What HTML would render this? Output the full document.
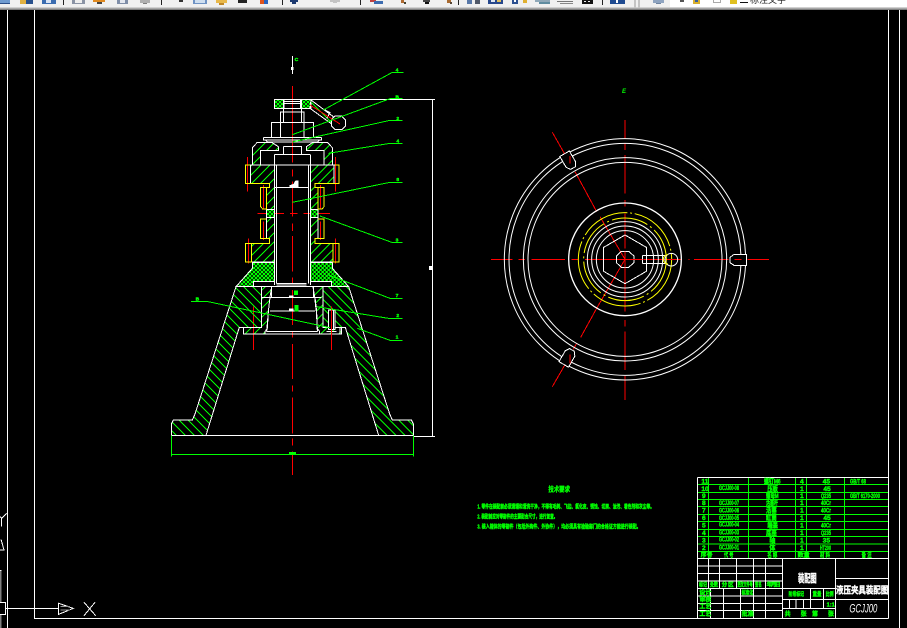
<!DOCTYPE html>
<html lang="zh">
<head>
<meta charset="utf-8">
<title>液压夹具装配图</title>
<style>
html,body{margin:0;padding:0;background:#000;width:907px;height:628px;overflow:hidden}
svg{display:block;position:absolute;left:0;top:0}
text{font-family:"Liberation Sans","Noto Sans CJK SC",sans-serif}
.g{fill:#0f0;stroke:#0f0;stroke-width:1.2;font-weight:700}
.w{fill:#fff;stroke:#fff;stroke-width:1.2;font-weight:700}
</style>
</head>
<body>
<svg width="907" height="628" viewBox="0 0 907 628" xmlns="http://www.w3.org/2000/svg" shape-rendering="crispEdges">
<defs>
<pattern id="sl" width="27" height="27" patternUnits="userSpaceOnUse"><path d="M-3,30 L30,-3 M-3,3 L3,-3 M24,30 L30,24" stroke="#0f0" stroke-width="2.2" fill="none"/></pattern>
<pattern id="bk" width="27" height="27" patternUnits="userSpaceOnUse"><path d="M-3,-3 L30,30 M24,-3 L30,3 M-3,24 L3,30" stroke="#0f0" stroke-width="2.2" fill="none"/></pattern>
<pattern id="dn" width="12" height="12" patternUnits="userSpaceOnUse"><rect width="12" height="12" fill="#000"/><path d="M-1,13 L13,-1 M-1,-1 L13,13" stroke="#0f0" stroke-width="2.6" fill="none"/></pattern>
<g id="A">
<path d="M277,345 V293 L292,277 H335 L355,290 V301 H302 V345Z"/>
<path d="M272,345 H343 V478 H320 V412 H329 V400 H272Z"/>
<path d="M320,502 H343 V636 H275 V580 H329 V565 H320Z"/>
<path d="M305,710 H335 L330,742 L325,785 L322,835 L315,845 V852 H250 V832 H305Z"/>
</g>
<g id="B"><path d="M228,710 L105,1092 L97,1110 L40,1110 L34,1122 V1156 H138 L238,832 H305 V710Z"/></g>
<g id="D">
<rect x="320" y="478" width="23" height="24"/>
<path d="M277,638 H343 V695 H280 V710 H228 L277,655Z"/>
</g>
<g id="Y" fill="none" stroke="#ff0" stroke-width="3">
<path d="M272,345 H257 V400 H329 V412 H302 V470 L308,477 H320 V412"/>
<path d="M320,507 H302 V565 H329 V580 H257 V636 H275 V580"/>
</g>
<g id="W" fill="none" stroke="#fff" stroke-width="3">
<path d="M343,345 V705 M349,345 V700 M343,313 V345 M302,345 H343"/>
<path d="M310,262 H397 M310,262 V270 H397 M316,270 L322,276 H397"/>
<path d="M334,262 V217 H397 M362,217 V262 M362,217 V186 H397 M370,186 V217 M370,186 V176 M372,176 V155 H397 M372,148 V176"/>
</g>
<path id="S" d="M770,403 H732 L720,412 V428 L732,436 H770Z" fill="#000" stroke="#fff" stroke-width="3"/>
</defs>

<rect width="907" height="628" fill="#000"/>

<!-- toolbar -->
<rect width="907" height="7" fill="#f0f0f0"/>
<rect y="7" width="907" height="1" fill="#d0d0d0"/>
<rect y="8" width="907" height="1" fill="#a8a8a8"/>
<rect y="9" width="907" height="1" fill="#808080"/>
<g>
<rect x="0" y="0" width="10" height="3" fill="#6f9bd0"/><rect x="0" y="3" width="10" height="1" fill="#2c4f88"/>
<rect x="20" y="0" width="7" height="4" fill="#e0b040"/><rect x="26" y="0" width="7" height="4" fill="#28508c"/>
<rect x="42" y="0" width="14" height="4" fill="#3a6cb0"/><rect x="46" y="0" width="5" height="3" fill="#d8e4f4"/>
<rect x="63" y="0" width="1" height="5" fill="#222"/>
<rect x="72" y="0" width="13" height="4" fill="#8a93a4"/><rect x="75" y="0" width="7" height="3" fill="#eee"/>
<rect x="93" y="0" width="12" height="2" fill="#e08a20"/><rect x="97" y="2" width="5" height="2" fill="#444"/>
<rect x="117" y="0" width="11" height="4" fill="#7f8ea8"/><rect x="120" y="0" width="5" height="3" fill="#e4e8f0"/>
<rect x="140" y="0" width="10" height="3" fill="#b0b0b0"/><rect x="143" y="3" width="4" height="1" fill="#808080"/>
<rect x="161" y="0" width="1" height="5" fill="#222"/>
<rect x="179" y="0" width="4" height="2" fill="#333"/>
<rect x="193" y="0" width="14" height="4" fill="#6f93c4"/><rect x="195" y="0" width="10" height="3" fill="#cfdff0"/>
<rect x="216" y="0" width="11" height="3" fill="#e8b84a"/><rect x="219" y="3" width="5" height="2" fill="#c08828"/>
<rect x="238" y="0" width="9" height="3" fill="#222"/>
<rect x="260" y="0" width="5" height="4" fill="#e0541c"/><rect x="264" y="0" width="4" height="4" fill="#2a64c0"/>
<rect x="282" y="0" width="1" height="5" fill="#222"/>
<rect x="290" y="0" width="8" height="2" fill="#1c3a70"/><rect x="292" y="2" width="4" height="2" fill="#1c3a70"/>
<rect x="330" y="0" width="10" height="2" fill="#c4c4c4"/><rect x="333" y="2" width="4" height="1" fill="#c4c4c4"/>
<rect x="360" y="0" width="1" height="5" fill="#222"/>
<rect x="370" y="0" width="6" height="2" fill="#c04040"/><rect x="374" y="1" width="9" height="3" fill="#3c6cb0"/>
<rect x="401" y="0" width="3" height="3" fill="#b06a30"/><rect x="404" y="2" width="2" height="2" fill="#443"/>
<rect x="423" y="0" width="7" height="2" fill="#444"/><rect x="425" y="2" width="4" height="2" fill="#111"/>
<rect x="447" y="0" width="4" height="3" fill="#a86a30"/><rect x="450" y="2" width="2" height="2" fill="#543"/>
<rect x="458" y="0" width="1" height="5" fill="#222"/>
<rect x="467" y="0" width="5" height="4" fill="#5878a8"/><rect x="475" y="0" width="5" height="4" fill="#505868"/>
<rect x="488" y="0" width="15" height="4" fill="#27488c"/><rect x="491" y="0" width="4" height="2" fill="#dfe6f0"/><rect x="497" y="0" width="4" height="2" fill="#e0c060"/>
<rect x="512" y="0" width="6" height="4" fill="#2c5090"/><rect x="514" y="0" width="2" height="2" fill="#fff"/><rect x="523" y="0" width="4" height="3" fill="#e0b030"/>
<rect x="535" y="0" width="15" height="2" fill="#8fa8b8"/><rect x="539" y="2" width="11" height="2" fill="#5f8ca0"/>
<rect x="557" y="1" width="16" height="1" fill="#777"/><rect x="560" y="3" width="13" height="1" fill="#888"/>
<rect x="582" y="0" width="11" height="4" fill="#111"/><rect x="584" y="1" width="2" height="1" fill="#eee"/><rect x="588" y="1" width="2" height="1" fill="#eee"/>
<rect x="602" y="0" width="1" height="5" fill="#222"/>
<rect x="610" y="0" width="15" height="4" fill="#1e4a90"/><rect x="616" y="0" width="2" height="3" fill="#fff"/>
<rect x="634" y="0" width="2" height="8" fill="#c4c4c4"/><rect x="638" y="0" width="2" height="8" fill="#c4c4c4"/>
<rect x="653" y="0" width="11" height="3" fill="#8fa4c0"/><rect x="656" y="3" width="5" height="1" fill="#6f84a0"/>
<rect x="670" y="0" width="237" height="7" fill="#fff"/>
<rect x="680" y="0" width="4" height="2" fill="#555"/><rect x="693" y="0" width="7" height="4" fill="#d8b030"/><rect x="695" y="0" width="3" height="2" fill="#3860a0"/>
<rect x="713" y="0" width="8" height="3" fill="#aaa"/><rect x="714" y="0" width="6" height="2" fill="#fff"/>
<rect x="730" y="0" width="7" height="4" fill="#e0c020"/>
<rect x="740" y="2" width="8" height="1" fill="#111"/>
<text x="750" y="3" font-size="9" fill="#222" style="font-weight:400">标注文字</text>
</g>

<!-- frames -->
<g stroke="#fff" stroke-width="1" fill="none">
<path d="M7.5,10 V628 M34.5,10 V618.5 H888.5 M888.5,10 V618 M899.5,10 V628"/>
</g>

<!-- left section view, zoom coords -->
<g transform="translate(160 50) scale(.33333)">
<!-- red centres -->
<g stroke="#f00" stroke-width="3" fill="none">
<path d="M397,108 V338 M397,358 V380 M397,395 V500 M397,520 V543 M397,558 V665 M397,682 V702 M397,720 V825 M397,845 V862 M397,882 V987 M397,1007 V1025 M397,1043 V1150 M397,1165 V1187 M397,1205 V1275"/>
<path d="M262,321 V425 M526,321 V425 M310,405 V475 M481,405 V475 M310,515 V570 M481,515 V570 M265,565 V640 M526,565 V640"/>
<path d="M292,490 H372 M390,490 H412 M430,490 H510"/>
<path d="M280,770 V900 M514,770 V900"/>
</g>
<!-- hatched -->
<g stroke="#fff" stroke-width="3">
<use href="#D" fill="url(#dn)"/>
<use href="#D" fill="url(#dn)" transform="matrix(-1 0 0 1 794 0)"/>
<use href="#A" fill="url(#sl)"/>
<use href="#A" fill="url(#bk)" transform="matrix(-1 0 0 1 794 0)"/>
<use href="#B" fill="url(#bk)"/>
<use href="#B" fill="url(#sl)" transform="matrix(-1 0 0 1 794 0)"/>
</g>
<use href="#Y"/>
<use href="#Y" transform="matrix(-1 0 0 1 794 0)"/>
<use href="#W"/>
<use href="#W" transform="matrix(-1 0 0 1 794 0)"/>
<!-- top nut -->
<g stroke="#fff" stroke-width="3" fill="url(#dn)">
<rect x="343" y="148" width="27" height="28"/><rect x="425" y="148" width="28" height="28"/>
</g>
<g fill="none" stroke="#fff" stroke-width="3">
<path d="M370,148 H425 M370,160 H425 M370,176 H425 M370,186 H425"/>
<path d="M370,290 V313 H425 V290 H370 M355,290 V301 M439,290 V301 M343,313 H450 M343,345 H450"/>
<path d="M270,345 H525"/>
<path d="M345,412 H445 M349,705 H440 M349,700 H440"/>
<path d="M305,742 H485 M330,783 H465"/>
<path d="M320,845 H472 M320,852 H472 M250,852 H540 V832 H490"/>
<path d="M335,710 V742 M460,710 V742 M330,742 L325,785 M465,742 L470,785 M325,785 L320,845 M470,785 L472,845"/>
<path d="M228,710 H566"/>
<path d="M34,1156 H761"/>
</g>
<!-- bolt -->
<rect x="505" y="780" width="20" height="58" fill="#000" stroke="#fff" stroke-width="3"/>
<path d="M520,780 V838 M500,845 H530" stroke="#fff" stroke-width="3" fill="none"/>
<path d="M514,770 V900" stroke="#f00" stroke-width="3"/>
<!-- handle -->
<path d="M453,150 L520,200 L515,222 L450,175Z" fill="url(#bk)" stroke="#fff" stroke-width="3"/>
<path d="M492,178 L510,188 L500,205" fill="none" stroke="#fff" stroke-width="3"/>
<path d="M525,198 H545 L556,210 V228 L545,239 H525 L514,228 V210Z" fill="#000" stroke="#fff" stroke-width="3"/>
<path d="M450,165 L540,222" stroke="#f00" stroke-width="3" fill="none"/>
<!-- blobs -->
<path d="M388,412 V406 L400,402 L406,392 H416 V412Z" fill="#fff"/>
<rect x="387" y="736" width="14" height="7" fill="#fff"/>
<rect x="387" y="775" width="14" height="10" fill="#fff"/>
<!-- section C mark -->
<path d="M397,18 V72" stroke="#fff" stroke-width="3"/><rect x="393" y="51" width="8" height="9" fill="#fff"/>
<!-- dimension -->
<path d="M453,148 H825 M817,148 V1159 M760,1159 H825" stroke="#fff" stroke-width="3" fill="none"/>
<rect x="807" y="648" width="10" height="12" fill="#fff"/>
<g stroke="#0f0" stroke-width="3" fill="none">
<path d="M34,1156 V1220 M761,1156 V1220 M34,1213 H761"/>
<path d="M730,67 H697 L490,180"/>
<path d="M728,146 H690 L397,254"/>
<path d="M728,211 H690 L397,276"/>
<path d="M728,280 H690 L505,310"/>
<path d="M728,397 H690 L397,457"/>
<path d="M728,577 H695 L480,498"/>
<path d="M728,745 H690 L505,675"/>
<path d="M728,805 H685 L470,770"/>
<path d="M728,871 H690 L592,835"/>
<path d="M93,754 H140 L510,833"/>
</g>
<rect x="387" y="1206" width="21" height="8" fill="#0f0"/>
<rect x="402" y="721" width="12" height="14" fill="#0f0"/>
<rect x="404" y="765" width="12" height="20" fill="#0f0"/>
<g class="g" font-size="15">
<text x="707" y="64">4</text><text x="706" y="145">B</text><text x="709" y="210">2</text><text x="709" y="277">4</text><text x="709" y="393">8</text><text x="707" y="574">3</text>
<text x="707" y="741">7</text><text x="709" y="801">2</text><text x="707" y="866">1</text><text x="107" y="751">B</text>
<text x="404" y="33">C</text>
</g>
</g>

<!-- right view, zoom coords -->
<g transform="translate(490 120) scale(.33333)">
<g stroke="#f00" stroke-width="3" fill="none">
<path d="M3,418 H68 M85,418 H105 M125,418 H225 M245,418 H265 M285,418 H385 M400,418 H425 M460,418 H575 M595,418 H598 M612,418 H715 M733,418 H755 M772,418 H837"/>
<path d="M405,0 V55 M405,70 V90 M405,105 V220 M405,240 V260 M405,280 V385 M405,400 V425 M405,440 V575 M405,600 V620 M405,635 V750 M405,768 V840"/>
<path d="M187,37 L240,130 M255,155 L320,275 M330,290 L405,418 L320,565 L272,652 M260,670 L250,688 M240,708 L187,800"/>
</g>
<g fill="none" stroke="#fff" stroke-width="3" shape-rendering="auto">
<circle cx="405" cy="418" r="362"/>
<circle cx="405" cy="418" r="348"/>
<circle cx="405" cy="418" r="305"/>
<circle cx="405" cy="418" r="291"/>
<circle cx="405" cy="418" r="169" stroke-width="4"/>
<circle cx="405" cy="418" r="113"/>
<circle cx="405" cy="418" r="100"/>
<circle cx="405" cy="418" r="86"/>
</g>
<g fill="none" stroke="#ff0" stroke-width="3" shape-rendering="auto">
<circle cx="405" cy="418" r="140" stroke-dasharray="150 8 6 8"/>
<circle cx="405" cy="418" r="124" stroke-dasharray="110 10 6 10"/>
</g>
<path d="M405,345 L469,382 V454 L405,491 L341,454 V382Z" fill="none" stroke="#fff" stroke-width="3"/>
<path d="M394,394 H416 L432,408 V428 L416,442 H394 L379,428 V408Z" fill="none" stroke="#fff" stroke-width="3"/>
<path d="M458,407 H530 M458,430 H530 M458,407 V430" fill="none" stroke="#fff" stroke-width="3"/>
<circle cx="544" cy="419" r="19" fill="none" stroke="#fff" stroke-width="3" shape-rendering="auto"/>
<path d="M534,404 A 14 14 0 0 0 534,432" fill="none" stroke="#ff0" stroke-width="3" shape-rendering="auto"/>
<use href="#S"/>
<use href="#S" transform="rotate(-120 405 418)"/>
<use href="#S" transform="rotate(120 405 418)"/>
<path d="M240,108 V130 M240,704 V730 M733,418 H755" stroke="#f00" stroke-width="3" fill="none"/>
<path d="M405,418 H458 M532,418 H560 M405,395 V442 M385,418 H425" stroke="#f00" stroke-width="3" fill="none"/>
</g>
<text x="622" y="93" class="g" font-size="6" style="font-style:italic;stroke:none">E</text>

<!-- tech requirements -->
<g transform="translate(470 475) scale(.33333)" class="g">
<text x="235" y="49" font-size="20" textLength="65" lengthAdjust="spacingAndGlyphs">技术要求</text>
<text x="22" y="100" font-size="17" textLength="530" lengthAdjust="spacingAndGlyphs">1. 零件在装配前必须清理和清洗干净，不得有毛刺、飞边、氧化皮、锈蚀、切屑、油污、着色剂和灰尘等。</text>
<text x="22" y="131" font-size="17" textLength="240" lengthAdjust="spacingAndGlyphs">2. 装配前应对零部件的主要配合尺寸，进行复查。</text>
<text x="22" y="161" font-size="17" textLength="490" lengthAdjust="spacingAndGlyphs">3. 装入箱体的零部件（包括外购件、外协件），均必须具有检验部门的合格证方能进行装配。</text>
</g>

<!-- title block -->
<g transform="translate(690 470) scale(.33333)">
<g stroke="#0f0" stroke-width="3" fill="none">
<path d="M22,44 H595 M22,67 H595 M22,88 H595 M22,110 H595 M22,133 H595 M22,155 H595 M22,178 H595 M22,200 H595 M22,222 H595 M22,244 H595"/>
<path d="M55,22 V265 M175,22 V265 M317,22 V265 M350,22 V265 M463,22 V265"/>
</g>
<g stroke="#fff" stroke-width="3" fill="none">
<path d="M22,22 H595 M22,22 V445 M22,265 H595 M595,0 V445 M-10,445 H595"/>
<path d="M22,288 H277 M22,310 H277 M22,333 H277 M22,355 H436 M22,378 H277 M22,400 H277 M22,422 H277"/>
<path d="M55,265 V355 M88,265 V355 M140,265 V355 M190,265 V355 M227,265 V355"/>
<path d="M62,355 V445 M100,355 V445 M152,355 V445 M190,355 V445 M227,355 V445"/>
<path d="M277,265 V445 M436,265 V445 M436,325 H595 M436,388 H595 M277,388 H436 M277,415 H436"/>
<path d="M362,355 V415 M400,355 V415 M298,388 V415 M318,388 V415 M340,388 V415"/>
</g>
<g class="g" font-size="20">
<text x="34" y="41">11</text><text x="222" y="41" textLength="50" lengthAdjust="spacingAndGlyphs">螺钉M6</text><text x="330" y="41">4</text><text x="398" y="41">45</text><text x="480" y="41" textLength="48" lengthAdjust="spacingAndGlyphs">GB/T 68</text>
<text x="34" y="63">10</text><text x="87" y="60" textLength="60" lengthAdjust="spacingAndGlyphs">GCJJ00-08</text><text x="232" y="63" textLength="32" lengthAdjust="spacingAndGlyphs">压板</text><text x="330" y="63">1</text><text x="400" y="63">45</text>
<text x="36" y="84">9</text><text x="228" y="84" textLength="38" lengthAdjust="spacingAndGlyphs">螺母M</text><text x="330" y="84">1</text><text x="393" y="84" textLength="30" lengthAdjust="spacingAndGlyphs">Q235</text><text x="480" y="84" textLength="90" lengthAdjust="spacingAndGlyphs">GB/T 6170-2000</text>
<text x="36" y="105">8</text><text x="87" y="105" textLength="60" lengthAdjust="spacingAndGlyphs">GCJJ00-07</text><text x="228" y="105" textLength="36" lengthAdjust="spacingAndGlyphs">活塞杆</text><text x="330" y="105">1</text><text x="393" y="105" textLength="30" lengthAdjust="spacingAndGlyphs">40Cr</text>
<text x="36" y="128">7</text><text x="87" y="128" textLength="60" lengthAdjust="spacingAndGlyphs">GCJJ00-06</text><text x="228" y="128" textLength="32" lengthAdjust="spacingAndGlyphs">活塞</text><text x="330" y="128">1</text><text x="393" y="128" textLength="30" lengthAdjust="spacingAndGlyphs">40Cr</text>
<text x="36" y="150">6</text><text x="87" y="150" textLength="60" lengthAdjust="spacingAndGlyphs">GCJJ00-05</text><text x="228" y="150" textLength="32" lengthAdjust="spacingAndGlyphs">缸筒</text><text x="330" y="150">1</text><text x="400" y="150">45</text>
<text x="36" y="172">5</text><text x="87" y="170" textLength="60" lengthAdjust="spacingAndGlyphs">GCJJ00-04</text><text x="232" y="172" textLength="32" lengthAdjust="spacingAndGlyphs">端盖</text><text x="330" y="172">1</text><text x="393" y="172" textLength="30" lengthAdjust="spacingAndGlyphs">40Cr</text>
<text x="36" y="195">4</text><text x="87" y="193" textLength="60" lengthAdjust="spacingAndGlyphs">GCJJ00-03</text><text x="228" y="195" textLength="32" lengthAdjust="spacingAndGlyphs">底座</text><text x="330" y="195">1</text><text x="393" y="195" textLength="30" lengthAdjust="spacingAndGlyphs">Q235</text>
<text x="36" y="217">3</text><text x="87" y="215" textLength="60" lengthAdjust="spacingAndGlyphs">GCJJ00-02</text><text x="238" y="217" textLength="18" lengthAdjust="spacingAndGlyphs">轴</text><text x="330" y="217">1</text><text x="398" y="217">35</text>
<text x="36" y="240">2</text><text x="87" y="238" textLength="60" lengthAdjust="spacingAndGlyphs">GCJJ00-01</text><text x="238" y="240" textLength="18" lengthAdjust="spacingAndGlyphs">体</text><text x="330" y="240">1</text><text x="390" y="240" textLength="33" lengthAdjust="spacingAndGlyphs">HT200</text>
<text x="32" y="261" font-size="18">序号</text><text x="102" y="261" textLength="28" lengthAdjust="spacingAndGlyphs">代 号</text><text x="232" y="261" textLength="30" lengthAdjust="spacingAndGlyphs">名 称</text><text x="323" y="261" font-size="18">数量</text><text x="390" y="261" textLength="30" lengthAdjust="spacingAndGlyphs">材 料</text><text x="515" y="261" textLength="30" lengthAdjust="spacingAndGlyphs">备 注</text>
<text x="27" y="350" font-size="17" textLength="24" lengthAdjust="spacingAndGlyphs">标记</text><text x="60" y="350" font-size="17" textLength="24" lengthAdjust="spacingAndGlyphs">处数</text><text x="95" y="350" font-size="17" textLength="36" lengthAdjust="spacing">分区</text><text x="142" y="350" font-size="17" textLength="46" lengthAdjust="spacingAndGlyphs">更改文件号</text><text x="195" y="350" font-size="17" textLength="20" lengthAdjust="spacingAndGlyphs">签名</text><text x="230" y="350" font-size="17" textLength="42" lengthAdjust="spacing">年月日</text>
<text x="28" y="374" font-size="18">设计</text><text x="155" y="374" font-size="17" textLength="34" lengthAdjust="spacingAndGlyphs">标准化</text>
<text x="28" y="394" font-size="18">审核</text>
<text x="28" y="416" font-size="18">工艺</text>
<text x="28" y="438" font-size="18">工艺</text><text x="155" y="438" font-size="18">批准</text>
<text x="296" y="378" font-size="17" textLength="46" lengthAdjust="spacingAndGlyphs">阶段标记</text><text x="368" y="378" font-size="17" textLength="26" lengthAdjust="spacingAndGlyphs">重量</text><text x="407" y="378" font-size="17" textLength="24" lengthAdjust="spacingAndGlyphs">比例</text>
<text x="410" y="410" font-size="17">1:1</text>
<text x="284" y="438" font-size="18">共</text><text x="332" y="438" font-size="18">张</text><text x="366" y="438" font-size="18">第</text><text x="414" y="438" font-size="18">张</text>
</g>
<text x="324" y="336" class="w" font-size="32" textLength="56" lengthAdjust="spacingAndGlyphs">装配图</text>
<text x="438" y="370" class="w" font-size="29" textLength="157" lengthAdjust="spacingAndGlyphs">液压夹具装配图</text>
<text x="478" y="428" font-size="37" fill="#fff" font-style="italic" textLength="84" lengthAdjust="spacingAndGlyphs">GCJJ00</text>
</g>

<!-- UCS + left fragments -->
<g transform="translate(0 500) scale(.33333)" fill="none" stroke="#fff" stroke-width="3">
<path d="M20,40 L5,55 V80 M5,55 L0,50"/>
<path d="M3,118 L12,150 H0"/>
<rect x="0" y="212" width="5" height="172" fill="#808080" stroke="none"/>
<path d="M0,212 H5"/>
<rect x="-3" y="307" width="19" height="36" fill="#000"/>
<path d="M18,325 H175"/>
<path d="M176,310 V343 L220,325Z"/>
<path d="M182,320 H210 M182,330 H210" stroke="#999"/>
<path d="M252,307 L287,347 M285,307 L252,347"/>
</g>
</svg>
</body>
</html>
